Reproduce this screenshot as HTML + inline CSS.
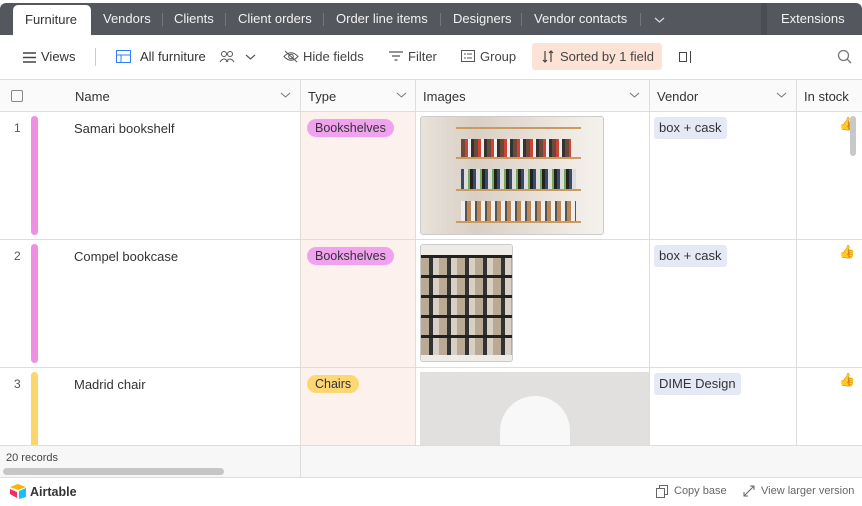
<!DOCTYPE html><html><head><style>
*{box-sizing:border-box;margin:0;padding:0}
body{width:862px;height:506px;background:#fff;font-family:"Liberation Sans",sans-serif;font-size:13px;color:#333;position:relative;overflow:hidden}
.a{position:absolute}
.tabs{left:0;top:3px;width:862px;height:32px;background:#54575e;border-radius:6px 6px 0 0}
.tab{position:absolute;top:0;height:32px;line-height:32px;color:#f2f2f2;font-size:13px}
.sep{position:absolute;top:10px;width:1px;height:13px;background:#777}
.tb{font-size:13px;color:#444;top:49px}
.hd{top:79px;height:33px;border-top:1px solid #ddd;border-bottom:1px solid #ddd;width:862px;left:0;background:#fafafa}
.hc{position:absolute;top:9px;color:#333}
.vl{position:absolute;width:1px;background:#ddd}
.row{left:0;width:862px;border-bottom:1px solid #ddd}
.pill{position:absolute;height:18px;line-height:18px;border-radius:9px;padding:0 8px;font-size:12.5px;color:#333}
.ven{position:absolute;height:22px;line-height:22px;padding:0 5px;background:#e5e9f5;border-radius:3px;color:#333}
.chev{position:absolute;top:12px}
</style></head><body>
<div class="a tabs">
<div class="a" style="left:13px;top:2px;width:78px;height:30px;background:#fff;border-radius:5px 5px 0 0"></div>
<div class="tab" style="left:25px;color:#333;top:1px">Furniture</div>
<div class="tab" style="left:103px">Vendors</div><div class="sep" style="left:162px"></div>
<div class="tab" style="left:174px">Clients</div><div class="sep" style="left:225px"></div>
<div class="tab" style="left:238px">Client orders</div><div class="sep" style="left:323px"></div>
<div class="tab" style="left:336px">Order line items</div><div class="sep" style="left:440px"></div>
<div class="tab" style="left:453px">Designers</div><div class="sep" style="left:521px"></div>
<div class="tab" style="left:534px">Vendor contacts</div><div class="sep" style="left:640px"></div>
<svg class="a" style="left:654px;top:14px" width="11" height="6"><path d="M1 1L5.5 5L10 1" fill="none" stroke="#ddd" stroke-width="1.2"/></svg>
<div class="a" style="left:761px;top:0;width:6px;height:32px;background:#4a4d53"></div>
<div class="tab" style="left:781px">Extensions</div>
</div>
<svg class="a" style="left:23px;top:52px" width="13" height="11"><path d="M0 1H13M0 5.5H13M0 10H13" stroke="#444" stroke-width="1.4"/></svg>
<div class="a tb" style="left:41px;color:#333">Views</div>
<div class="a" style="left:95px;top:48px;width:1px;height:18px;background:#ccc"></div>
<svg class="a" style="left:116px;top:50px" width="15" height="13"><rect x=".5" y=".5" width="14" height="12" fill="none" stroke="#2d7ff9"/><line x1="0" y1="5" x2="15" y2="5" stroke="#2d7ff9"/><line x1="5" y1="5" x2="5" y2="13" stroke="#2d7ff9"/></svg>
<div class="a tb" style="left:140px;color:#333">All furniture</div>
<svg class="a" style="left:219px;top:50px" width="16" height="13"><circle cx="5" cy="4" r="2.5" fill="none" stroke="#555"/><circle cx="11" cy="4" r="2.5" fill="none" stroke="#555"/><path d="M1 12Q5 6 9 12M7 12Q11 6 15 12" fill="none" stroke="#555"/></svg>
<svg class="a" style="left:245px;top:54px" width="11" height="6"><path d="M1 1L5.5 5L10 1" fill="none" stroke="#555" stroke-width="1.2"/></svg>
<svg class="a" style="left:283px;top:50px" width="16" height="13"><path d="M1 6.5Q8 -1 15 6.5Q8 14 1 6.5Z" fill="none" stroke="#555"/><circle cx="8" cy="6.5" r="2.3" fill="none" stroke="#555"/><line x1="2" y1="1" x2="14" y2="12" stroke="#555"/></svg>
<div class="a tb" style="left:303px">Hide fields</div>
<svg class="a" style="left:389px;top:51px" width="14" height="10"><path d="M0 1H14M3 5H11M5.5 9H8.5" stroke="#555" stroke-width="1.3"/></svg>
<div class="a tb" style="left:408px">Filter</div>
<svg class="a" style="left:461px;top:50px" width="14" height="12"><rect x=".5" y=".5" width="13" height="11" fill="none" stroke="#555"/><path d="M3 4H5M6 4H11M3 8H5M6 8H11" stroke="#555"/></svg>
<div class="a tb" style="left:480px">Group</div>
<div class="a" style="left:532px;top:43px;width:130px;height:27px;background:#fde3d5;border-radius:3px"></div>
<svg class="a" style="left:542px;top:50px" width="12" height="13"><path d="M3 1V12M1 10L3 12L5 10M9 12V1M7 3L9 1L11 3" fill="none" stroke="#444" stroke-width="1.2"/></svg>
<div class="a tb" style="left:560px">Sorted by 1 field</div>
<div class="a" style="left:679px;top:52px;width:8px;height:10px;border:1.3px solid #444"></div>
<div class="a" style="left:690px;top:51px;width:1.3px;height:12px;background:#444"></div>
<svg class="a" style="left:837px;top:49px" width="15" height="15"><circle cx="6.5" cy="6.5" r="5" fill="none" stroke="#777" stroke-width="1.3"/><line x1="10" y1="10" x2="14" y2="14" stroke="#777" stroke-width="1.3"/></svg>

<div class="a hd">
<div class="a" style="left:11px;top:10px;width:12px;height:12px;border:1px solid #888;border-radius:2px"></div>
<div class="hc" style="left:75px">Name</div>
<div class="hc" style="left:308px">Type</div>
<div class="hc" style="left:423px">Images</div>
<div class="hc" style="left:657px">Vendor</div>
<div class="hc" style="left:804px">In stock</div>
<svg class="chev" style="left:280px" width="11" height="6"><path d="M1 1L5.5 5L10 1" fill="none" stroke="#777"/></svg>
<svg class="chev" style="left:396px" width="11" height="6"><path d="M1 1L5.5 5L10 1" fill="none" stroke="#777"/></svg>
<svg class="chev" style="left:629px" width="11" height="6"><path d="M1 1L5.5 5L10 1" fill="none" stroke="#777"/></svg>
<svg class="chev" style="left:776px" width="11" height="6"><path d="M1 1L5.5 5L10 1" fill="none" stroke="#777"/></svg>
</div>
<div class="a" style="left:300px;top:112px;width:115px;height:333px;background:#fdf1ed"></div>
<div class="a row" style="top:111px;height:129px"></div>
<div class="a row" style="top:239px;height:129px"></div>
<div class="vl" style="left:300px;top:79px;height:399px"></div>
<div class="vl" style="left:415px;top:79px;height:366px"></div>
<div class="vl" style="left:649px;top:79px;height:366px"></div>
<div class="vl" style="left:796px;top:79px;height:366px"></div>

<div class="a" style="left:14px;top:121px;font-size:12px;color:#555">1</div>
<div class="a" style="left:14px;top:249px;font-size:12px;color:#555">2</div>
<div class="a" style="left:14px;top:377px;font-size:12px;color:#555">3</div>
<div class="a" style="left:31px;top:116px;width:7px;height:119px;background:#ef8fe4;border-radius:4px"></div>
<div class="a" style="left:31px;top:244px;width:7px;height:119px;background:#ef8fe4;border-radius:4px"></div>
<div class="a" style="left:31px;top:372px;width:7px;height:80px;background:#fcd66a;border-radius:4px"></div>
<div class="a" style="left:74px;top:121px">Samari bookshelf</div>
<div class="a" style="left:74px;top:249px">Compel bookcase</div>
<div class="a" style="left:74px;top:377px">Madrid chair</div>
<div class="pill" style="left:307px;top:119px;background:#f1a2ef">Bookshelves</div>
<div class="pill" style="left:307px;top:247px;background:#f1a2ef">Bookshelves</div>
<div class="pill" style="left:307px;top:375px;background:#fdd774">Chairs</div>

<div class="a" style="left:420px;top:116px;width:184px;height:119px;border-radius:3px;background:linear-gradient(90deg,#e8e2da,#d9cfc4 30%,#efe9e2 80%,#f4f1ed);border:1px solid #ccc;overflow:hidden">
<div class="a" style="left:35px;top:10px;width:125px;height:2px;background:#c79b62"></div>
<div class="a" style="left:35px;top:40px;width:125px;height:2px;background:#c79b62"></div>
<div class="a" style="left:35px;top:72px;width:125px;height:2px;background:#c79b62"></div>
<div class="a" style="left:35px;top:104px;width:125px;height:2px;background:#c79b62"></div>
<div class="a" style="left:40px;top:22px;width:110px;height:18px;background:repeating-linear-gradient(90deg,#6b4a3a 0 4px,#c43 4px 7px,#eee 7px 10px,#333 10px 13px)"></div>
<div class="a" style="left:40px;top:52px;width:115px;height:20px;background:repeating-linear-gradient(90deg,#3a4a6b 0 3px,#ddd 3px 7px,#7a5 7px 9px,#222 9px 12px)"></div>
<div class="a" style="left:40px;top:84px;width:115px;height:20px;background:repeating-linear-gradient(90deg,#eee 0 4px,#555 4px 6px,#b85 6px 10px)"></div>
</div>
<div class="a" style="left:420px;top:244px;width:93px;height:118px;border-radius:3px;background:#efece8;border:1px solid #ccc;overflow:hidden">
<div class="a" style="left:0;top:10px;width:93px;height:100px;background:repeating-linear-gradient(180deg,#222 0 3px,transparent 3px 20px),repeating-linear-gradient(90deg,#b9a995 0 8px,#333 8px 12px,#d8d0c5 12px 18px)"></div>
</div>
<div class="a" style="left:420px;top:372px;width:229px;height:73px;background:#e2e0de;overflow:hidden">
<div class="a" style="left:80px;top:24px;width:70px;height:80px;background:#f8f8f8;border-radius:35px 35px 0 0"></div>
</div>

<div class="ven" style="left:654px;top:117px">box + cask</div>
<div class="ven" style="left:654px;top:245px">box + cask</div>
<div class="ven" style="left:654px;top:373px">DIME Design</div>
<div class="a" style="left:839px;top:116px;color:#f5b400;font-size:13px">&#128077;</div>
<div class="a" style="left:839px;top:244px;color:#f5b400;font-size:13px">&#128077;</div>
<div class="a" style="left:839px;top:372px;color:#f5b400;font-size:13px">&#128077;</div>
<div class="a" style="left:850px;top:116px;width:6px;height:40px;background:#c8c8c8;border-radius:3px"></div>

<div class="a" style="left:0;top:445px;width:862px;height:33px;background:#f7f7f7;border-top:1px solid #ddd;border-bottom:1px solid #ddd"></div>
<div class="vl" style="left:300px;top:445px;height:33px"></div>
<div class="a" style="left:6px;top:452px;font-size:11px;color:#444">20 records</div>
<div class="a" style="left:3px;top:468px;width:221px;height:7px;background:#c6c6c6;border-radius:4px"></div>
<svg class="a" style="left:9px;top:484px" width="18" height="15"><path d="M1 3 L9 0 L17 3 L9 6Z" fill="#fcb400"/><path d="M10 7 L17 4 L17 13 L10 15Z" fill="#18bfff"/><path d="M1 5 L8 8 L8 14 L1 10Z" fill="#f82b60"/></svg>
<div class="a" style="left:30px;top:485px;font-size:12.5px;font-weight:bold;color:#333">Airtable</div>
<svg class="a" style="left:656px;top:485px" width="12" height="13"><rect x="3.5" y=".5" width="8" height="9" fill="none" stroke="#666"/><rect x=".5" y="3.5" width="8" height="9" fill="#fff" stroke="#666"/></svg>
<div class="a" style="left:674px;top:485px;font-size:11px;color:#666">Copy base</div>
<svg class="a" style="left:743px;top:485px" width="12" height="12"><path d="M1 11L11 1M7 1H11V5M1 7V11H5" fill="none" stroke="#666"/></svg>
<div class="a" style="left:761px;top:485px;font-size:11px;color:#666">View larger version</div>
</body></html>
